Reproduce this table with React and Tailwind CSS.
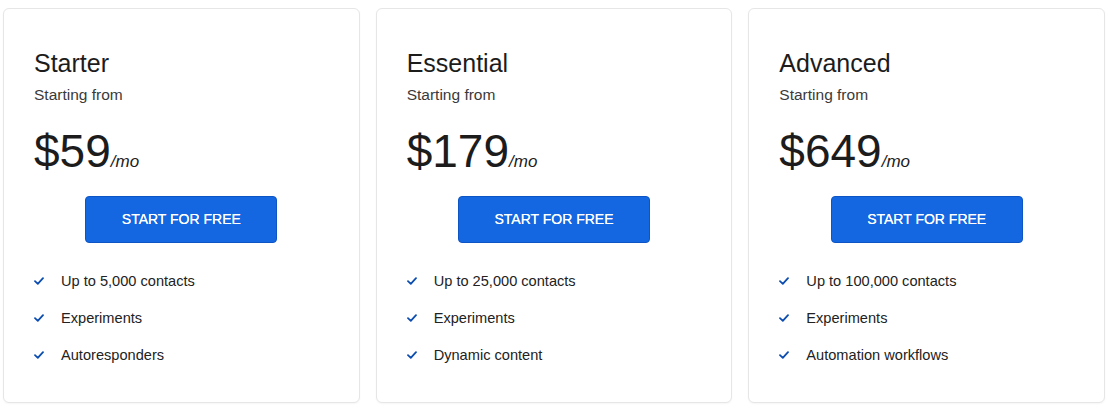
const plans = [
  {
    name: "Starter",
    price: "$59",
    features: ["Up to 5,000 contacts", "Experiments", "Autoresponders"],
  },
  {
    name: "Essential",
    price: "$179",
    features: ["Up to 25,000 contacts", "Experiments", "Dynamic content"],
  },
  {
    name: "Advanced",
    price: "$649",
    features: ["Up to 100,000 contacts", "Experiments", "Automation workflows"],
  },
];

const Check = () => (
  <svg width="10" height="8" viewBox="0 0 10 8" className="shrink-0">
    <path d="M1 4.2 L3.8 6.8 L9 1.2" fill="none" stroke="#0b4db0" strokeWidth="1.8" strokeLinecap="round" strokeLinejoin="round" />
  </svg>
);

const PlanCard = ({ name, price, features }) => (
  <div className="flex-1 flex flex-col rounded-md border border-[#e6e6e6] bg-white pl-[30px] pr-6 pt-[39px] pb-[37px] shadow-[0_1px_2px_rgba(0,0,0,0.04)]">
    <h2 className="text-[25px] leading-[30px] text-[#1c1c1c]">{name}</h2>
    <p className="mt-[7px] text-[15.5px] leading-5 text-[#3a3a3a]">Starting from</p>

    <div className="mt-[23px] flex items-baseline text-[#1c1c1c]">
      <span className="text-[46px] leading-[46px]">{price}</span>
      <span className="text-[17px] italic">/mo</span>
    </div>

    <div className="mt-[21px] flex justify-center pr-[6px]">
      <button className="h-[47px] w-[192px] rounded-[4px] border border-[#0d55c4] bg-[#1467e0] text-[14px] text-white [text-shadow:0_0_0.4px_#fff]">
        START FOR FREE
      </button>
    </div>

    <ul className="mt-[28px] flex flex-col gap-[17px]">
      {features.map((f) => (
        <li key={f} className="flex items-center gap-[17px] text-[14.6px] leading-5 text-[#222]">
          <Check />
          <span>{f}</span>
        </li>
      ))}
    </ul>
  </div>
);

export default function App() {
  return (
    <div className="w-[1108px] h-[408px] bg-white px-[3px] pt-2 font-['Liberation_Sans',Arial,sans-serif]">
      <div className="flex gap-4">
        {plans.map((p) => (
          <PlanCard key={p.name} {...p} />
        ))}
      </div>
    </div>
  );
}
